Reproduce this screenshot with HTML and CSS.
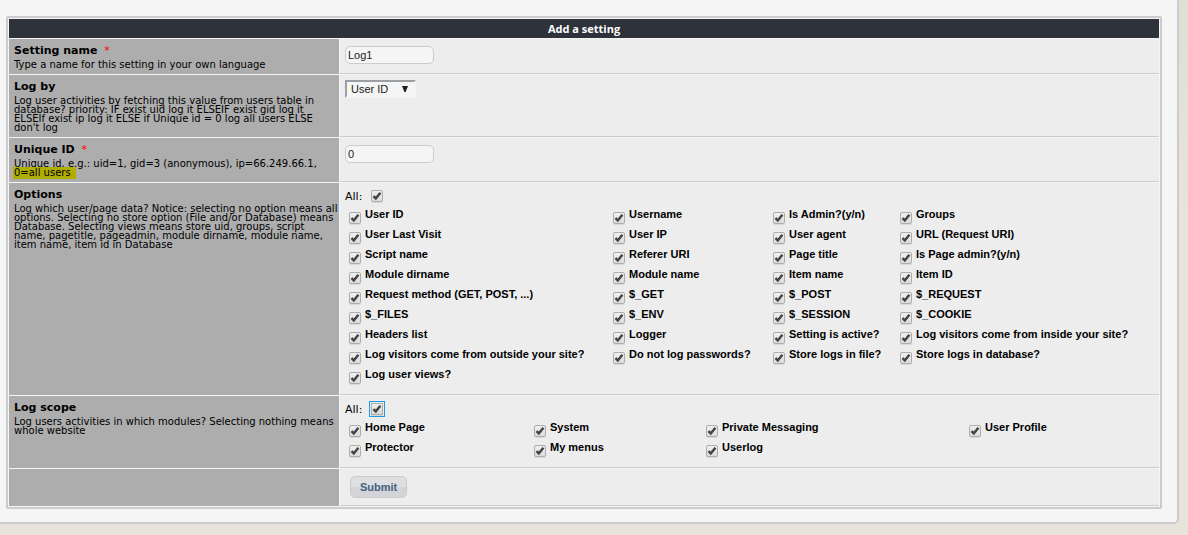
FILE: index.html
```
<!DOCTYPE html>
<html lang="en">
<head>
<meta charset="utf-8">
<title>Add a setting</title>
<link rel="stylesheet" href="styles.css">
</head>
<body>
<main class="panel">
<form>
<table class="settings">
<colgroup><col class="col-label"><col></colgroup>
<thead><tr><th colspan="2" class="title">Add a setting</th></tr></thead>
<tbody>
<tr>
<th scope="row" class="head"><label class="name" for="logname">Setting name <span class="req">*</span></label><p class="desc">Type a name for this setting in your own language</p></th>
<td class="field"><input class="text" id="logname" type="text" value="Log1"></td>
</tr>
<tr>
<th scope="row" class="head"><label class="name" for="logby">Log by</label><p class="desc">Log user activities by fetching this value from users table in<br>database? priority: IF exist uid log it ELSEIF exist gid log it<br>ELSEIf exist ip log it ELSE if Unique id = 0 log all users ELSE<br>don't log</p></th>
<td class="field"><div class="select-wrap"><select class="select" id="logby"><option>User ID</option></select><svg class="arrow" viewBox="0 0 6 6" aria-hidden="true"><path d="M0 0H6L3.6 6H2.4Z"/></svg></div></td>
</tr>
<tr>
<th scope="row" class="head"><label class="name" for="uniqueid">Unique ID <span class="req">*</span></label><p class="desc">Unique id, e.g.: uid=1, gid=3 (anonymous), ip=66.249.66.1,<br><mark class="mark">0=all users</mark></p></th>
<td class="field"><input class="text" id="uniqueid" type="text" value="0"></td>
</tr>
<tr>
<th scope="row" class="head"><span class="name">Options</span><p class="desc">Log which user/page data? Notice: selecting no option means all<br>options. Selecting no store option (File and/or Database) means<br>Database. Selecting views means store uid, groups, script<br>name, pagetitle, pageadmin, module dirname, module name,<br>item name, item id in Database</p></th>
<td class="field">
<label class="all">All: <input class="check" type="checkbox" checked></label>
<div class="checks options">
<label class="item"><input class="check" type="checkbox" checked>User ID</label>
<label class="item"><input class="check" type="checkbox" checked>Username</label>
<label class="item"><input class="check" type="checkbox" checked>Is Admin?(y/n)</label>
<label class="item"><input class="check" type="checkbox" checked>Groups</label>
<label class="item"><input class="check" type="checkbox" checked>User Last Visit</label>
<label class="item"><input class="check" type="checkbox" checked>User IP</label>
<label class="item"><input class="check" type="checkbox" checked>User agent</label>
<label class="item"><input class="check" type="checkbox" checked>URL (Request URI)</label>
<label class="item"><input class="check" type="checkbox" checked>Script name</label>
<label class="item"><input class="check" type="checkbox" checked>Referer URI</label>
<label class="item"><input class="check" type="checkbox" checked>Page title</label>
<label class="item"><input class="check" type="checkbox" checked>Is Page admin?(y/n)</label>
<label class="item"><input class="check" type="checkbox" checked>Module dirname</label>
<label class="item"><input class="check" type="checkbox" checked>Module name</label>
<label class="item"><input class="check" type="checkbox" checked>Item name</label>
<label class="item"><input class="check" type="checkbox" checked>Item ID</label>
<label class="item"><input class="check" type="checkbox" checked>Request method (GET, POST, ...)</label>
<label class="item"><input class="check" type="checkbox" checked>$_GET</label>
<label class="item"><input class="check" type="checkbox" checked>$_POST</label>
<label class="item"><input class="check" type="checkbox" checked>$_REQUEST</label>
<label class="item"><input class="check" type="checkbox" checked>$_FILES</label>
<label class="item"><input class="check" type="checkbox" checked>$_ENV</label>
<label class="item"><input class="check" type="checkbox" checked>$_SESSION</label>
<label class="item"><input class="check" type="checkbox" checked>$_COOKIE</label>
<label class="item"><input class="check" type="checkbox" checked>Headers list</label>
<label class="item"><input class="check" type="checkbox" checked>Logger</label>
<label class="item"><input class="check" type="checkbox" checked>Setting is active?</label>
<label class="item"><input class="check" type="checkbox" checked>Log visitors come from inside your site?</label>
<label class="item"><input class="check" type="checkbox" checked>Log visitors come from outside your site?</label>
<label class="item"><input class="check" type="checkbox" checked>Do not log passwords?</label>
<label class="item"><input class="check" type="checkbox" checked>Store logs in file?</label>
<label class="item"><input class="check" type="checkbox" checked>Store logs in database?</label>
<label class="item"><input class="check" type="checkbox" checked>Log user views?</label>
</div>
</td>
</tr>
<tr>
<th scope="row" class="head"><span class="name">Log scope</span><p class="desc">Log users activities in which modules? Selecting nothing means<br>whole website</p></th>
<td class="field">
<label class="all">All: <input class="check current" type="checkbox" checked></label>
<div class="checks modules">
<label class="item"><input class="check" type="checkbox" checked>Home Page</label>
<label class="item"><input class="check" type="checkbox" checked>System</label>
<label class="item"><input class="check" type="checkbox" checked>Private Messaging</label>
<label class="item"><input class="check" type="checkbox" checked>User Profile</label>
<label class="item"><input class="check" type="checkbox" checked>Protector</label>
<label class="item"><input class="check" type="checkbox" checked>My menus</label>
<label class="item"><input class="check" type="checkbox" checked>Userlog</label>
</div>
</td>
</tr>
<tr>
<td class="head"></td>
<td class="field"><button class="submit" type="button">Submit</button></td>
</tr>
</tbody>
</table>
</form>
</main>
</body>
</html>
```

FILE: styles.css
```
* { box-sizing: border-box; }
body {
  margin: 0;
  min-height: 100vh;
  background: #e8e4dc linear-gradient(#e1ded2, #e8e4dc) top / 100% 220px no-repeat;
  font-family: Verdana, "DejaVu Sans", sans-serif;
  font-size: 11px;
  color: #000;
}
.panel {
  margin-right: 9px;
  padding: 16px 15px 13px 6px;
  background: #f5f5f5;
  border: solid #ccc;
  border-width: 0 2px 2px 0;
  border-radius: 0 0 5px 0;
}
.settings {
  width: 100%;
  table-layout: fixed;
  border: 2px solid #ccc;
  border-radius: 2px;
  border-spacing: 1px;
}
.col-label { width: 330px; }
.title {
  height: 19px;
  padding: 0;
  background: #2e323b;
  color: #fff;
  font: bold 11px/19px "Open Sans", sans-serif;
  text-align: center;
}
.head {
  padding: 5px;
  background: #adadad;
  text-align: left;
  vertical-align: top;
  font-weight: normal;
}
.name {
  display: block;
  font-size: 11px;
  line-height: 13px;
  font-weight: bold;
}
.req { margin-left: 3px; color: #f00; font-weight: normal; }
.desc {
  margin: 3px 0 0;
  font-size: 10px;
  line-height: 9px;
  white-space: nowrap;
}
.mark {
  margin-left: -1px;
  padding: 0 5px 1px 1px;
  background: #b0ae00;
  color: #000;
}
.field {
  padding: 5px;
  background: #ededed;
  border-bottom: 1px solid #ccc;
  vertical-align: top;
}
.text {
  display: block;
  width: 89px;
  height: 18px;
  margin: 2px 0;
  padding: 0 2px;
  background: #f5f5f5;
  border: 1px solid #ccc;
  border-radius: 5px;
  color: #222;
  font: 11px "Liberation Sans", Arial, sans-serif;
}
.select-wrap { position: relative; width: 71px; }
.select {
  display: block;
  appearance: none;
  width: 100%;
  height: 18px;
  padding: 0 4px;
  background: #f5f5f5;
  border: 2px solid;
  border-color: #9a9fa3 #f5f5f5 #f5f5f5 #9a9fa3;
  border-radius: 0;
  color: #222;
  font: 11px "Liberation Sans", Arial, sans-serif;
}
.arrow {
  position: absolute;
  top: 6px;
  right: 8px;
  width: 6px;
  height: 6px;
  fill: #222;
  pointer-events: none;
}
.all {
  display: flex;
  align-items: center;
  gap: 9px;
  height: 16px;
}
.checks { display: grid; padding: 0 4px 5px; }
.options { grid-template-columns: 264px 160px 127px 1fr; }
.modules { grid-template-columns: 185px 172px 263px 1fr; }
.item {
  display: flex;
  align-items: flex-end;
  gap: 4px;
  height: 20px;
  font: bold 11px/20px "Liberation Sans", Arial, sans-serif;
  white-space: nowrap;
}
.check {
  appearance: none;
  flex: none;
  width: 12px;
  height: 12px;
  margin: 0;
  border: 1px solid #adadad;
  border-radius: 2px;
  background: url("data:image/svg+xml,%3Csvg xmlns='http://www.w3.org/2000/svg' viewBox='0 0 10 10'%3E%3Cpath d='M1.5 5.2L3.8 7.5L8.4 1.8' fill='none' stroke='%23444' stroke-width='2.5'/%3E%3C/svg%3E") center / 10px 10px no-repeat, linear-gradient(#efefef, #dcdcdc);
  box-shadow: 0 1px 0 #d8d8d8;
}
.current { border-radius: 0; outline: 1px solid #1a9be0; outline-offset: 1px; }
.submit {
  display: block;
  height: 22px;
  margin: 2px 5px;
  padding: 0 9px;
  background: linear-gradient(#dedfe2 50%, #d3d4d8 50%);
  border: 1px solid #ccc;
  border-radius: 5px;
  color: #456080;
  font: bold 11px "Liberation Sans", Arial, sans-serif;
}
```
